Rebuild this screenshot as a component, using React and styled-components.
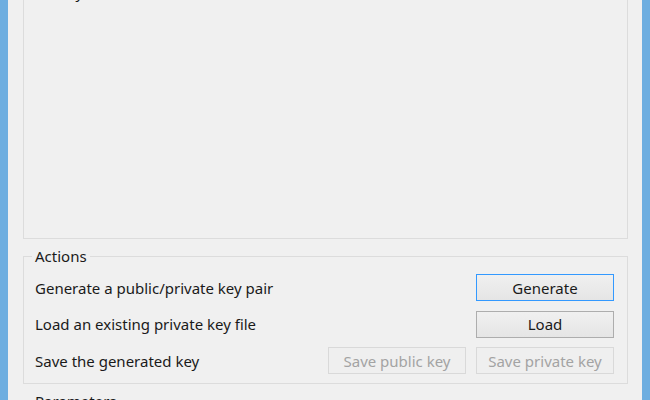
import React from 'react';
import styled, {createGlobalStyle} from "styled-components";

const GlobalStyle = createGlobalStyle`
  html, body {
    margin: 0;
    padding: 0;
    background: #f0f0f0;
  }
  #root {
    height: 400px;
    overflow: hidden;
  }
`;

const actions = [
    {label: "Generate a public/private key pair", buttons: [{text: "Generate", focused: true}]},
    {label: "Load an existing private key file", buttons: [{text: "Load"}]},
    {label: "Save the generated key", buttons: [{text: "Save public key", disabled: true}, {text: "Save private key", disabled: true}]},
];

const KeyGenWindow = () => {
    return (
        <Frame>
            <Client>
                <KeyGroup>
                    <Legend>Key</Legend>
                    <NoKey>No key.</NoKey>
                </KeyGroup>

                <Group>
                    <Legend>Actions</Legend>
                    <ActionGrid>
                        {actions.map((row, i) => (
                            <React.Fragment key={i}>
                                <Label>{row.label}</Label>
                                {row.buttons.length === 1 ? <span/> : null}
                                {row.buttons.map(b => (
                                    <Button key={b.text} focused={b.focused} disabled={b.disabled}>{b.text}</Button>
                                ))}
                            </React.Fragment>
                        ))}
                    </ActionGrid>
                </Group>

                <Group>
                    <Legend>Parameters</Legend>
                    <ParamSpace/>
                </Group>
            </Client>
        </Frame>
    );
};

export default function App() {
    return (
        <>
            <GlobalStyle/>
            <KeyGenWindow/>
        </>
    );
}


const Frame = styled.div`
    height: 400px;
    display: flex;
    border-left: 8px solid #6eaee0;
    border-right: 8px solid #6eaee0;
    background: #f0f0f0;
    font-family: "Noto Sans", "Open Sans", sans-serif;
    font-size: 15px;
    color: #1a1a1a;
`;

const Client = styled.div`
    flex: 1;
    display: flex;
    flex-direction: column;
    padding: 0 14px 0 15px;
`;

const Group = styled.fieldset`
    margin: 8px 0 0 0;
    padding: 0;
    min-width: 0;
    border: 1px solid #dcdcdc;
    border-radius: 0;
`;

const KeyGroup = styled(Group)`
    margin-top: -60px;
    height: 299px;
    box-sizing: border-box;
    flex-shrink: 0;
`;

const Legend = styled.legend`
    margin-left: 8px;
    padding: 0 3px;
    line-height: 18px;
`;

const NoKey = styled.div`
    padding: 25px 11px 0;
    line-height: 18px;
`;

const ActionGrid = styled.div`
    display: grid;
    grid-template-columns: 1fr 138px 138px;
    grid-auto-rows: 27px;
    column-gap: 10px;
    row-gap: 9.5px;
    align-items: center;
    padding: 9px 13px 9px 11px;
`;

const Label = styled.div`
    white-space: nowrap;
`;

const Button = styled.button`
    height: 27px;
    margin: 0;
    padding: 0;
    font: inherit;
    border-radius: 0;
    color: ${props => props.disabled ? "#a3a3a3" : "#1a1a1a"};
    border: 1px solid ${props => props.disabled ? "#d9d9d9" : props.focused ? "#3399ff" : "#adadad"};
    background: ${props => props.disabled ? "#efefef" : "linear-gradient(#f0f0f0, #e5e5e5)"};
`;

const ParamSpace = styled.div`
    height: 60px;
`;
